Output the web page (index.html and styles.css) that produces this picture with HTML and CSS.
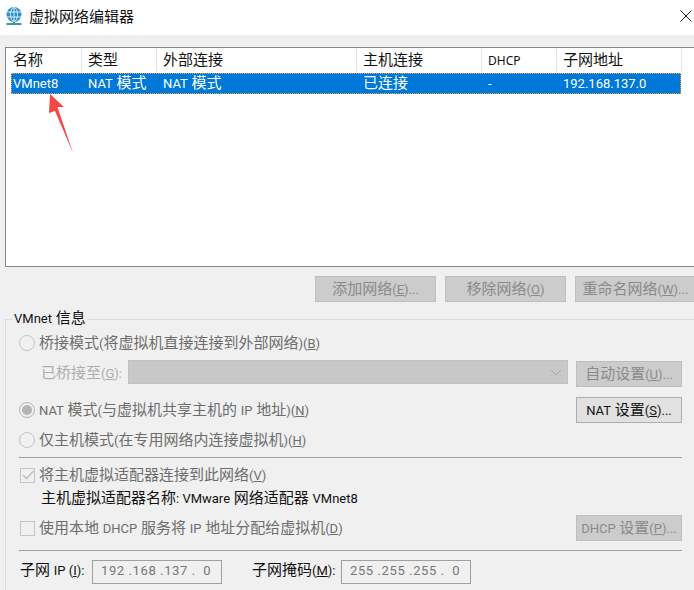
FILE: index.html
```html
<!DOCTYPE html>
<html lang="zh-CN">
<head>
  <meta charset="UTF-8">
  <meta name="viewport" content="width=device-width, initial-scale=1.0">
  <title>虚拟网络编辑器</title>
  <link rel="stylesheet" href="styles.css">
</head>
<body>
<div class="titlebar">
  <svg class="app-icon" width="18" height="20" viewBox="0 0 18 20">
    <circle cx="9" cy="7.500" r="7.500" fill="#2b8fc7"/>
    <g fill="none" stroke="#d8eef8" stroke-width="1">
      <ellipse cx="9" cy="7.500" rx="3.500" ry="7"/>
      <path d="M2 5h14M2 10h14M9 .5v14"/>
    </g>
    <path d="M9 15v1" stroke="#3a8a8a" stroke-width="2"/>
    <path d="M1.500 17h15" stroke="#3f9a96" stroke-width="2"/>
  </svg>
  <span class="title">虚拟网络编辑器</span>
  <svg class="close" width="12" height="12" viewBox="0 0 12 12">
    <path d="M0.5 0.5l11 11M11.500 0.5l-11 11" stroke="#222" stroke-width="1" fill="none"/>
  </svg>
</div>

<div class="main">
  <div class="list">
    <div class="list-row list-head">
      <div class="c1">名称</div>
      <div class="c2">类型</div>
      <div class="c3">外部连接</div>
      <div class="c4">主机连接</div>
      <div class="c5 small">DHCP</div>
      <div class="c6">子网地址</div>
    </div>
    <div class="list-row selected">
      <div class="c1"><span class="la">VMnet8</span></div>
      <div class="c2"><span class="la">NAT</span> 模式</div>
      <div class="c3"><span class="la">NAT</span> 模式</div>
      <div class="c4">已连接</div>
      <div class="c5"><span class="la">-</span></div>
      <div class="c6"><span class="la">192.168.137.0</span></div>
    </div>
  </div>

  <div class="net-buttons">
    <button class="btn wide" disabled>添加网络<span class="la">(<u>E</u>)...</span></button>
    <button class="btn wide" disabled>移除网络<span class="la">(<u>O</u>)</span></button>
    <button class="btn wide" disabled>重命名网络<span class="la">(<u>W</u>)...</span></button>
  </div>

  <fieldset class="group">
    <legend><span class="la">VMnet</span> 信息</legend>

    <div class="opt r1">
      <span class="radio"></span>
      <span class="dim">桥接模式<span class="la">(</span>将虚拟机直接连接到外部网络<span class="la">)(<u>B</u>)</span></span>
    </div>
    <div class="opt r2">
      <span class="bridge-label">已桥接至<span class="la">(<u>G</u>):</span></span>
      <div class="select">
        <svg width="12" height="7" viewBox="0 0 12 7"><path d="M1 1l5 5 5-5" fill="none" stroke="#a8a8a8"/></svg>
      </div>
      <button class="btn side" disabled>自动设置<span class="la">(<u>U</u>)...</span></button>
    </div>
    <div class="opt r3">
      <span class="radio checked"></span>
      <span class="dim"><span class="la">NAT</span> 模式<span class="la">(</span>与虚拟机共享主机的 <span class="la">IP</span> 地址<span class="la">)(<u>N</u>)</span></span>
      <button class="btn side active"><span class="la">NAT</span> 设置<span class="la">(<u>S</u>)...</span></button>
    </div>
    <div class="opt r4">
      <span class="radio"></span>
      <span class="dim">仅主机模式<span class="la">(</span>在专用网络内连接虚拟机<span class="la">)(<u>H</u>)</span></span>
    </div>

    <div class="rule"></div>

    <div class="opt r5">
      <span class="check">
        <svg width="12" height="10" viewBox="0 0 12 10"><path d="M1 5l3.500 3.500 7-7.500" fill="none" stroke="#bdbdbd" stroke-width="1.500"/></svg>
      </span>
      <span class="dim">将主机虚拟适配器连接到此网络<span class="la">(<u>V</u>)</span></span>
    </div>
    <div class="adapter">主机虚拟适配器名称<span class="la">: VMware</span> 网络适配器 <span class="la">VMnet8</span></div>
    <div class="opt r7">
      <span class="check"></span>
      <span class="dim">使用本地 <span class="la">DHCP</span> 服务将 <span class="la">IP</span> 地址分配给虚拟机<span class="la">(<u>D</u>)</span></span>
      <button class="btn side" disabled><span class="la">DHCP</span> 设置<span class="la">(<u>P</u>)...</span></button>
    </div>

    <div class="rule rule2"></div>

    <div class="subnet">
      <span class="subnet-ip">子网 <span class="la">IP (<u>I</u>):</span></span>
      <div class="ip">192 .168 .137 .&nbsp; 0</div>
      <span class="subnet-mask">子网掩码<span class="la">(<u>M</u>):</span></span>
      <div class="ip">255 .255 .255 .&nbsp; 0</div>
    </div>
  </fieldset>
</div>

<svg class="arrow" width="30" height="64" viewBox="0 0 30 64">
  <polygon points="5,0 19,13 12.500,13 28,59 10,17 4,19" fill="#f24848"/>
</svg>
</body>
</html>
```

FILE: styles.css
```css
* {
  box-sizing: border-box;
}

html, body {
  height: 590px;
  overflow: hidden;
}

body {
  margin: 0;
  position: relative;
  width: 694px;
  background-color: #f0f0f0;
  font-family: Roboto, "Noto Sans CJK SC", sans-serif;
  font-size: 15px;
  color: #111;
}

/* latin runs are smaller than the chinese next to them */
.la {
  font-size: 13px;
}

.titlebar {
  display: flex;
  align-items: center;
  height: 35px;
  padding: 0 2px 0 5px;
  background-color: #fff;
}

.app-icon {
  margin-top: -1px;
}

.title {
  margin: -5px 0 0 6px;
}

.close {
  margin-left: auto;
  margin-top: -3px;
}

.main {
  padding: 12px 0 0 5px;
}

.list {
  width: 700px;
  height: 220px;
  padding-right: 18px;
  background-color: #fff;
  border: 1px solid #85858f;
}

.list-row {
  display: flex;
  width: 676px;
}

.list-head {
  height: 25px;
  line-height: 25px;
}

.list-head > div {
  padding-left: 6px;
  border-right: 1px solid #e5e5e5;
}

.list-head .c1 {
  padding-left: 7px;
}

.list-head .small {
  font-size: 12px;
  font-family: "Noto Sans", sans-serif;
}

.selected {
  height: 21px;
  margin-left: 5px;
  width: 670px;
  line-height: 21px;
  color: #fff;
  background-color: #0078d7;
  outline: 1px dotted #f3a33d;
  outline-offset: -1px;
}

.selected > div {
  padding-left: 7px;
}

.selected .c1 {
  width: 70px;
  padding-left: 2px;
}

.c1 { width: 76px; }
.c2 { width: 75px; }
.c3 { width: 200px; }
.c4 { width: 125px; }
.c5 { width: 75px; }
.c6 { width: 125px; }

.net-buttons {
  display: flex;
  gap: 9px;
  margin: 9px 0 0 310px;
}

.btn {
  height: 26px;
  padding: 0 0 3px;
  font: inherit;
  color: #8a8a8a;
  background-color: #ccc;
  border: 1px solid #bfbfbf;
  flex-shrink: 0;
}

.wide {
  width: 121px;
}

.side {
  width: 106px;
  margin-left: auto;
}

.active {
  color: #111;
  background-color: #e1e1e1;
  border-color: #adadad;
}

.group {
  width: 700px;
  height: 290px;
  margin: 7px 0 0;
  padding: 0 0 0 13px;
  border: 0;
  border-top: 1px solid #dcdcdc;
  border-left: 1px solid #dcdcdc;
}

.group legend {
  margin-left: -7px;
  padding: 0 2px 2px;
  line-height: 18px;
}

.opt {
  display: flex;
  align-items: center;
  width: 663px;
  height: 24px;
}

.r1 { margin-top: 1px; }
.r2 { height: 27px; margin-top: 5px; }
.r3 { height: 26px; margin-top: 10px; }
.r4 { margin-top: 5px; }
.r5 { margin-top: 5px; }
.r7 { height: 26px; margin-top: 7px; }

.dim {
  margin-top: -4px;
  color: #6d6d6d;
}

.radio {
  flex: none;
  position: relative;
  width: 16px;
  height: 16px;
  margin-right: 4px;
  background-color: #f0f0f0;
  border: 1px solid #c4c4c4;
  border-radius: 50%;
}

.radio.checked {
  border-color: #b5b5b5;
}

.radio.checked::after {
  content: "";
  position: absolute;
  left: 2px;
  top: 2px;
  width: 10px;
  height: 10px;
  border-radius: 50%;
  background-color: #b5b5b5;
}

.check {
  flex: none;
  display: flex;
  align-items: center;
  justify-content: center;
  width: 15px;
  height: 15px;
  margin: 0 4px 0 1px;
  border: 1px solid #c4c4c4;
}

.bridge-label {
  width: 109px;
  padding: 0 0 4px 22px;
  color: #adadad;
}

.select {
  display: flex;
  align-items: center;
  justify-content: flex-end;
  width: 440px;
  height: 24px;
  margin-top: -3px;
  padding-right: 5px;
  background-color: #c8c8c8;
  border: 1px solid #c2c2c2;
}

.rule {
  width: 663px;
  height: 1px;
  margin-top: 5px;
  background-color: #a0a0a0;
}

.rule2 {
  margin-top: 9px;
}

.adapter {
  height: 21px;
  padding: 1px 0 0 22px;
  line-height: 21px;
}

.subnet {
  display: flex;
  align-items: center;
  height: 24px;
  margin-top: 9px;
}

.subnet-ip {
  width: 72px;
  margin: -7px 0 0 1px;
}

.subnet-mask {
  width: 89px;
  margin: -7px 0 0 30px;
}

.ip {
  width: 130px;
  height: 24px;
  padding-left: 8px;
  line-height: 20px;
  font-size: 13px;
  letter-spacing: 0.6px;
  color: #777;
  border: 1px solid #a0a0a0;
  white-space: nowrap;
}

.arrow {
  position: absolute;
  left: 45px;
  top: 94px;
}
```
